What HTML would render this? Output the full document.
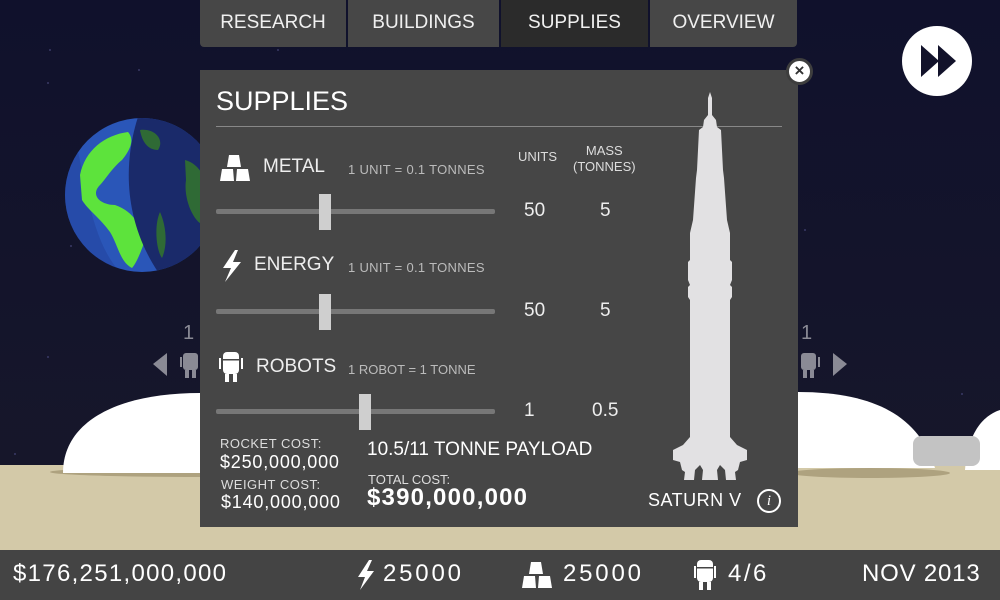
<!DOCTYPE html>
<html><head><meta charset="utf-8"><style>
*{margin:0;padding:0;box-sizing:border-box}
body{width:1000px;height:600px;overflow:hidden;background:#12122a;font-family:"Liberation Sans",sans-serif;color:#fff;position:relative}
.a{position:absolute;white-space:nowrap}
.tab{position:absolute;top:0;height:47px;background:#474747;font-size:19px;text-align:center;line-height:46px;color:#f0f0f0}
.track{position:absolute;left:216px;width:279px;height:5px;background:#777;border-radius:2px}
.knob{position:absolute;width:12px;height:36px;background:#cfcfcf}
.sm{font-size:13px;color:#bbb}
.lbl{font-size:19px;color:#eee}
.num{font-size:19px;color:#eee}
.bb{font-size:24px;letter-spacing:1.5px}
</style></head><body>
<svg class="a" style="left:0;top:0" width="1000" height="600">
<defs><linearGradient id="sky" x1="0" y1="0" x2="0" y2="1"><stop offset="0" stop-color="#10112c"/><stop offset="1" stop-color="#18182a"/></linearGradient>
<clipPath id="ec"><circle cx="142" cy="195" r="77"/></clipPath></defs>
<rect width="1000" height="600" fill="url(#sky)"/>
<g fill="#3a3a66"><circle cx="50" cy="50" r="1"/><circle cx="139" cy="70" r="1"/><circle cx="278" cy="50" r="1"/><circle cx="48" cy="83" r="1"/><circle cx="71" cy="246" r="1"/><circle cx="48" cy="357" r="1"/><circle cx="15" cy="454" r="1"/><circle cx="962" cy="394" r="1"/><circle cx="805" cy="230" r="1"/></g>
<g clip-path="url(#ec)">
<rect x="60" y="115" width="160" height="160" fill="#2a56b8"/>
<path d="M75 140 C85 175 90 240 120 272 C110 290 60 280 60 200Z" fill="#223f9a" opacity=".5"/>
<path d="M80 175 C85 150 105 135 128 132 C135 140 130 150 122 160 C112 168 105 180 100 185 C90 195 100 205 115 205 C130 210 140 222 145 240 C140 255 135 265 132 268 C120 262 118 245 110 232 C100 218 88 210 82 200Z" fill="#5de33c"/>
<path d="M138 117 C124 160 122 220 160 275 L230 275 L230 115Z" fill="#1a2a6a"/>
<path d="M140 130 C155 128 165 140 158 150 C148 150 142 142 140 130Z M185 160 C205 165 215 195 205 225 C195 225 183 200 186 180Z M160 212 C166 225 168 245 162 258 C156 250 154 225 160 212Z" fill="#2f6a35"/>
</g>
<rect x="0" y="465" width="1000" height="90" fill="#d3c9a8"/>
<ellipse cx="200" cy="472" rx="150" ry="5" fill="#aea27f"/>
<path d="M63 473 C63 420 120 393 200 393 L200 473Z" fill="#fff"/>
<ellipse cx="870" cy="473" rx="80" ry="5" fill="#aea27f"/>
<path d="M798 392 C880 392 920 420 935 468 L798 468Z" fill="#fff"/>
<path d="M965 470 C968 430 985 415 1000 410 L1000 470Z" fill="#fff"/>
<rect x="913" y="436" width="67" height="30" rx="8" fill="#c3c3c3"/>
<polygon points="167,353 153,364 167,376" fill="#8a8a95"/>
<polygon points="833,353 847,364 833,376" fill="#8a8a95"/>
<g fill="#8a8a95"><rect x="183" y="353" width="15" height="17" rx="3"/><rect x="185" y="370" width="4" height="8"/><rect x="192" y="370" width="4" height="8"/><rect x="180" y="357" width="2" height="10"/>
<rect x="801" y="353" width="15" height="17" rx="3"/><rect x="803" y="370" width="4" height="8"/><rect x="810" y="370" width="4" height="8"/><rect x="818" y="357" width="2" height="10"/></g>
<circle cx="937" cy="61" r="35" fill="#fff"/>
<polygon points="921,45 939,61 921,77" fill="#12122a"/><polygon points="938,45 956,61 938,77" fill="#12122a"/>
<rect x="0" y="550" width="1000" height="50" fill="#444"/>
</svg>
<div class="a" style="left:183px;top:322px;font-size:20px;color:#8a8a95">1</div>
<div class="a" style="left:801px;top:322px;font-size:20px;color:#8a8a95">1</div>
<div class="tab" style="left:200px;width:146px;border-radius:0 0 0 4px">RESEARCH</div>
<div class="tab" style="left:348px;width:151px">BUILDINGS</div>
<div class="tab" style="left:501px;width:147px;background:#2b2b2b">SUPPLIES</div>
<div class="tab" style="left:650px;width:147px;border-radius:0 0 4px 0">OVERVIEW</div>
<div class="a" style="left:200px;top:70px;width:598px;height:457px;background:#464646"></div>
<div class="a" style="left:216px;top:86px;font-size:27px">SUPPLIES</div>
<div class="a" style="left:216px;top:126px;width:566px;height:1px;background:#888"></div>
<svg class="a" style="left:660px;top:60px" width="120" height="430">
<path d="M50 32 L48 38 L48 55 L44 60 L43 67 L39 70 L37 110 L36 118 L33 160 L30 173 L30 200 L28 202 L28 220 L30 225 L28 227 L28 237 L30 240 L30 377 L23 385 L13 390 L13 400 L20 402 L22 410 L25 412 L24 420 L34 420 L35 410 L40 405 L43 410 L42 420 L58 420 L57 410 L60 405 L65 410 L66 420 L76 420 L75 412 L78 410 L80 402 L87 400 L87 390 L77 385 L70 377 L70 240 L72 237 L72 227 L70 225 L72 220 L72 202 L70 200 L70 173 L67 160 L64 118 L63 110 L61 70 L57 67 L56 60 L52 55 L52 38Z" fill="#e2e1e3"/>
</svg>
<div class="a" style="left:786px;top:58px;width:27px;height:27px;border-radius:50%;background:#fff;border:3px solid #3e3e3e;color:#333;font-size:17px;font-weight:bold;text-align:center;line-height:20px">×</div>
<svg class="a" style="left:220px;top:155px" width="30" height="26"><g fill="#fff"><polygon points="9,0 19,0 21,12 7,12"/><polygon points="2,14 13,14 14,26 0,26"/><polygon points="17,14 28,14 30,26 16,26"/></g></svg>
<div class="a lbl" style="left:263px;top:156px">METAL</div>
<div class="a sm" style="left:348px;top:162px;letter-spacing:.3px">1 UNIT = 0.1 TONNES</div>
<div class="a" style="left:518px;top:149px;font-size:13px;color:#ddd">UNITS</div>
<div class="a" style="left:573px;top:143px;font-size:13px;color:#ddd;text-align:center;line-height:16px">MASS<br>(TONNES)</div>
<div class="track" style="top:209px"></div><div class="knob" style="left:319px;top:194px"></div>
<div class="a num" style="left:524px;top:200px">50</div><div class="a num" style="left:600px;top:200px">5</div>
<svg class="a" style="left:221px;top:250px" width="22" height="32"><polygon points="14,0 2,18 10,18 4,32 20,12 12,12 17,0" fill="#fff"/></svg>
<div class="a lbl" style="left:254px;top:254px">ENERGY</div>
<div class="a sm" style="left:348px;top:260px;letter-spacing:.3px">1 UNIT = 0.1 TONNES</div>
<div class="track" style="top:309px"></div><div class="knob" style="left:319px;top:294px"></div>
<div class="a num" style="left:524px;top:300px">50</div><div class="a num" style="left:600px;top:300px">5</div>
<svg class="a" style="left:219px;top:352px" width="24" height="30"><g fill="#fff"><rect x="4" y="0" width="16" height="22" rx="4"/><rect x="0" y="6" width="2" height="11"/><rect x="22" y="6" width="2" height="11"/><rect x="6" y="22" width="4" height="8"/><rect x="14" y="22" width="4" height="8"/></g><rect x="4" y="7" width="16" height="1.5" fill="#464646"/></svg>
<div class="a lbl" style="left:256px;top:356px">ROBOTS</div>
<div class="a sm" style="left:348px;top:362px">1 ROBOT = 1 TONNE</div>
<div class="track" style="top:409px"></div><div class="knob" style="left:359px;top:394px"></div>
<div class="a num" style="left:524px;top:400px">1</div><div class="a num" style="left:592px;top:400px">0.5</div>
<div class="a" style="left:220px;top:436px;font-size:13px;color:#ddd;letter-spacing:.5px">ROCKET COST:</div>
<div class="a" style="left:220px;top:452px;font-size:18px;letter-spacing:.8px">$250,000,000</div>
<div class="a" style="left:221px;top:477px;font-size:13px;color:#ddd;letter-spacing:.5px">WEIGHT COST:</div>
<div class="a" style="left:221px;top:492px;font-size:18px;letter-spacing:.8px">$140,000,000</div>
<div class="a" style="left:367px;top:439px;font-size:19px;letter-spacing:0">10.5/11 TONNE PAYLOAD</div>
<div class="a" style="left:368px;top:472px;font-size:13px;color:#ddd">TOTAL COST:</div>
<div class="a" style="left:367px;top:484px;font-size:24px;font-weight:bold;letter-spacing:1.2px">$390,000,000</div>
<div class="a" style="left:648px;top:490px;font-size:18px;letter-spacing:.5px">SATURN V</div>
<div class="a" style="left:757px;top:489px;width:24px;height:24px;border-radius:50%;border:2px solid #fff;font:italic 15px 'Liberation Serif',serif;text-align:center;line-height:20px">i</div>
<div class="a bb" style="left:13px;top:560px;letter-spacing:1.3px">$176,251,000,000</div>
<svg class="a" style="left:357px;top:560px" width="18" height="30"><polygon points="12,0 1,17 8,17 3,30 17,11 10,11 15,0" fill="#fff"/></svg>
<div class="a bb" style="left:383px;top:560px;letter-spacing:2.8px">25000</div>
<svg class="a" style="left:522px;top:562px" width="30" height="26"><g fill="#fff"><polygon points="9,0 19,0 21,12 7,12"/><polygon points="2,14 13,14 14,26 0,26"/><polygon points="17,14 28,14 30,26 16,26"/></g></svg>
<div class="a bb" style="left:563px;top:560px;letter-spacing:2.8px">25000</div>
<svg class="a" style="left:694px;top:560px" width="22" height="30"><g fill="#fff"><rect x="3" y="0" width="16" height="22" rx="4"/><rect x="0" y="6" width="2" height="12"/><rect x="20" y="6" width="2" height="12"/><rect x="5" y="22" width="4" height="8"/><rect x="13" y="22" width="4" height="8"/></g><rect x="3" y="7" width="16" height="1.5" fill="#444"/></svg>
<div class="a bb" style="left:728px;top:560px;letter-spacing:2.5px">4/6</div>
<div class="a bb" style="left:862px;top:560px;letter-spacing:.8px">NOV 2013</div>
</body></html>
